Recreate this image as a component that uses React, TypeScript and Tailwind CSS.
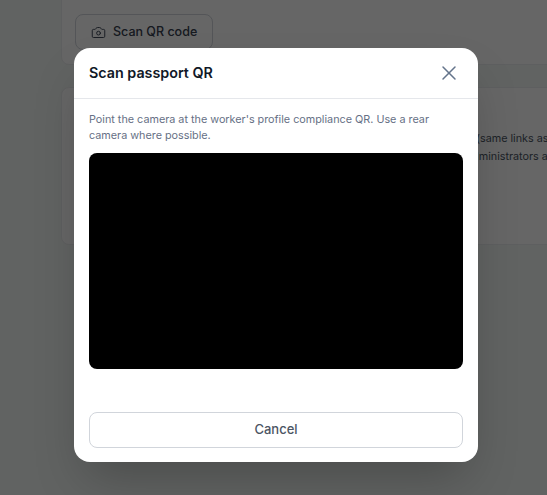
import React from "react";
import { Camera, X } from "lucide-react";

export default function App() {
  return (
    <div className="relative h-[495px] w-[547px] overflow-hidden bg-[#f3f7f4] font-['Inter',sans-serif]">
      {/* page behind the dialog */}
      <div className="-mt-[30px] flex flex-col gap-[22px] pl-[61px]">
        <div className="h-[95px] w-[520px] rounded-lg border border-[#eceef0] bg-white pl-[13px] pt-[43px]">
          <button className="flex h-[36px] w-[138px] items-center gap-[7px] rounded-lg border border-[#d1d5db] bg-white pl-[15px] text-[12.5px] font-medium text-[#374151]">
            <Camera size={15} strokeWidth={1.5} />
            Scan QR code
          </button>
        </div>
        <div className="flex h-[158px] w-[520px] flex-col rounded-lg border border-[#eceef0] bg-white pt-[42px] text-[10.8px] leading-[18px] text-[#4b5563]">
          <p className="whitespace-nowrap pl-[414px]">(same links as</p>
          <p className="whitespace-nowrap pl-[404px]">administrators a</p>
        </div>
      </div>

      {/* overlay */}
      <div className="absolute inset-0 bg-black/60" />

      {/* dialog */}
      <div className="absolute left-[74px] top-[48px] flex h-[414px] w-[404px] flex-col rounded-2xl bg-white shadow-2xl">
        <div className="flex h-[51px] shrink-0 items-center justify-between border-b border-[#e5e7eb] pl-[15px] pr-[17px]">
          <h2 className="text-[14.3px] font-semibold text-[#111827]">Scan passport QR</h2>
          <X size={24} strokeWidth={1.5} className="text-[#64748b]" />
        </div>
        <div className="flex flex-1 flex-col px-[15px] pt-[13px] pb-[14px]">
          <p className="pr-[30px] text-[10.8px] leading-[16px] text-[#667085]">
            Point the camera at the worker's profile compliance QR. Use a rear camera where possible.
          </p>
          <div className="mt-[9px] h-[216px] w-full rounded-lg bg-black" />
          <button className="mt-auto h-[36px] w-full rounded-lg border border-[#d1d5db] bg-white text-[13px] font-medium text-[#4b5563]">
            Cancel
          </button>
        </div>
      </div>
    </div>
  );
}
